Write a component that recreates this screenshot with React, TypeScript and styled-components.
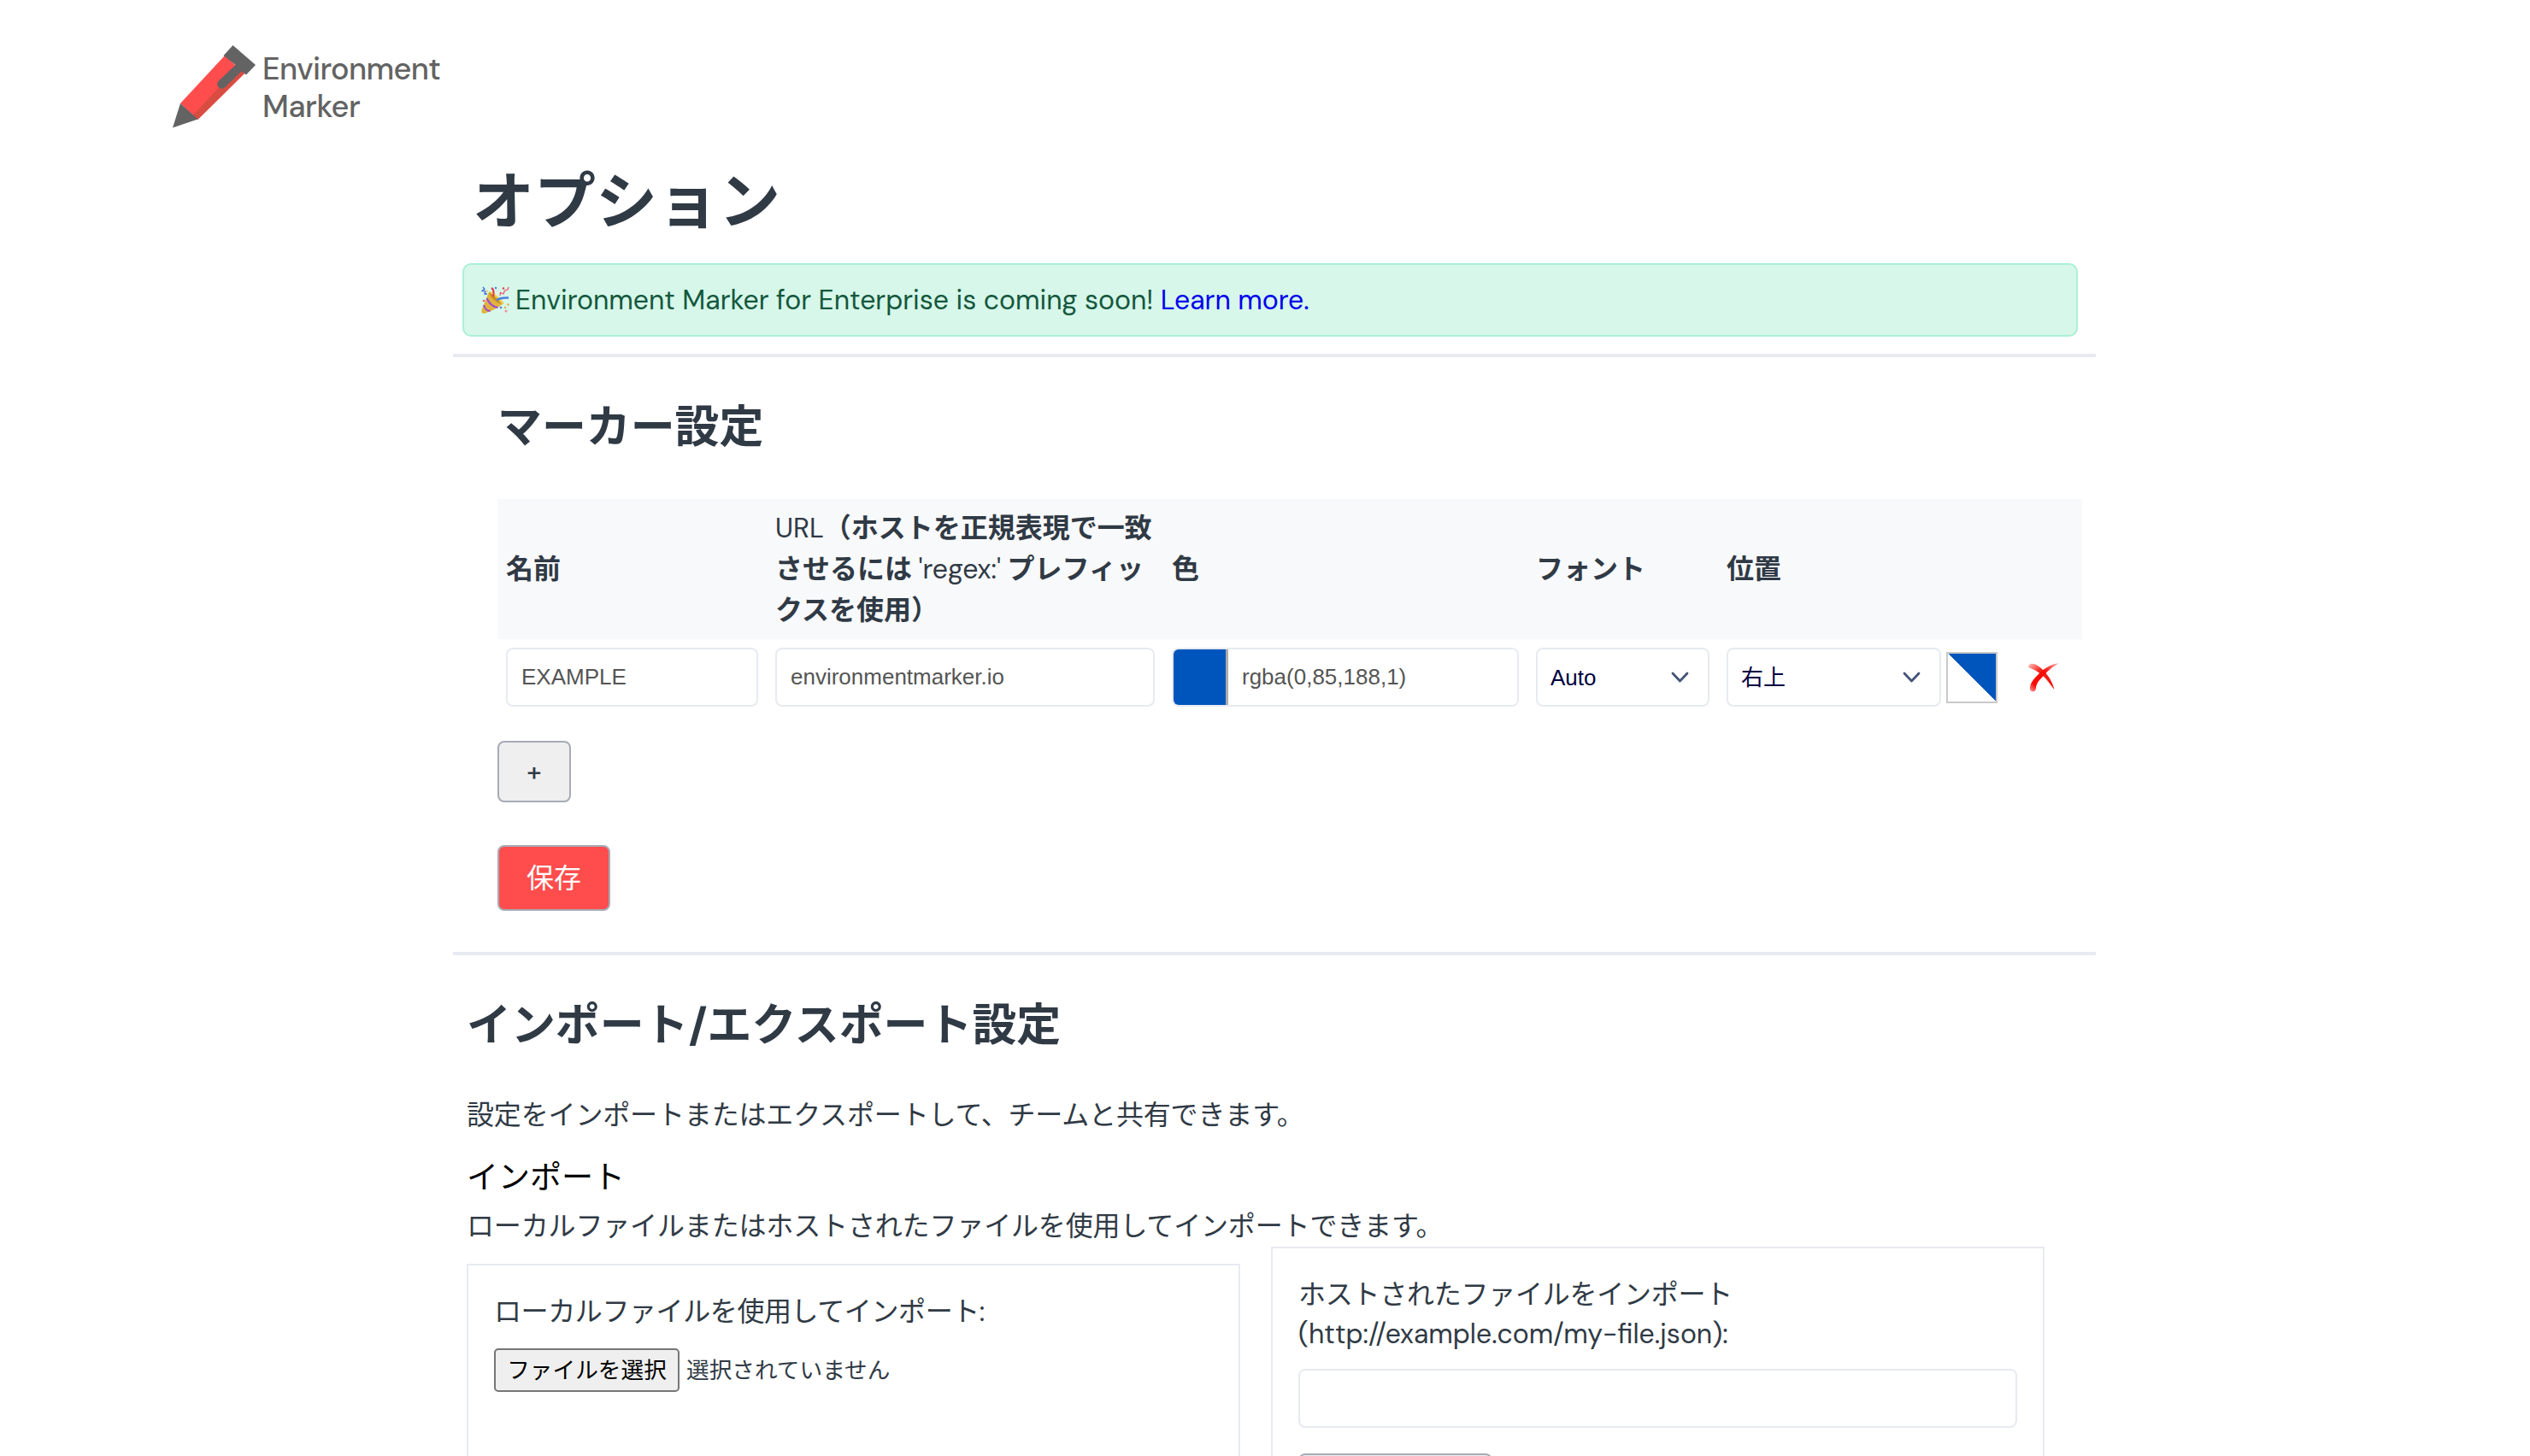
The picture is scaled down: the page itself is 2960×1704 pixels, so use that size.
import React from "react";
import styled, { createGlobalStyle } from "styled-components";

const GlobalStyle = createGlobalStyle`
  *, *::before, *::after { box-sizing: border-box; }
  body {
    margin: 0;
    background: #fff;
    color: #303a45;
    font: 400 32px/48px "DM Sans", Inter, "Noto Sans CJK JP", sans-serif;
  }
  h1, h2, h3, p { margin: 0; }
  button, input { font-family: "Liberation Sans", Arial, "Noto Sans CJK JP", sans-serif; }
`;

const Page = styled.div`
  height: 1704px;
  overflow: hidden;
`;

const Header = styled.header`
  display: flex;
  align-items: flex-start;
  gap: 8px;
  padding: 53px 0 0 202px;
  height: 199px;
`;

const Brand = styled.div`
  padding-top: 6px;
  color: #636363;
  font-size: 36px;
  font-weight: 500;
  line-height: 43.5px;
`;

const BrandLine = styled.div<{ $spacing: number }>`
  letter-spacing: ${(p) => p.$spacing}px;
`;

const Main = styled.main`
  width: 1922px;
  margin-left: 530px;
`;

const Title = styled.h1`
  padding-left: 23px;
  font-size: 72px;
  line-height: 76px;
  font-weight: 700;
`;

const Banner = styled.div`
  display: flex;
  align-items: center;
  height: 86px;
  margin: 33px 21px 20px 11px;
  padding-left: 20px;
  border: 2px solid #abf0d8;
  border-radius: 10px;
  background: #d6f7e9;
  color: #15573d;
  font-size: 32px;
  white-space: pre;
`;

const BannerText = styled.span`
  margin-left: 7px;
`;

const Link = styled.a`
  color: #0000ee;
  text-decoration: none;
`;

const Divider = styled.hr`
  height: 4px;
  margin: 0;
  border: 0;
  background: #e8eaf2;
`;

const MarkerSection = styled.section`
  padding: 50px 16px 48px 52px;
`;

const SectionTitle = styled.h2`
  font-size: 51.9px;
  line-height: 66px;
  font-weight: 700;
`;

const Table = styled.div`
  margin-top: 50px;
`;

const Row = styled.div<{ $head?: boolean }>`
  display: grid;
  grid-template-columns: 315px 464px 426px 223px 426px;
  align-items: center;
  background: ${(p) => (p.$head ? "#f8f9fb" : "transparent")};
`;

const Cell = styled.div`
  display: flex;
  align-items: center;
  padding: 10px;
`;

const HeadCell = styled.div`
  padding: 10px;
  font-weight: 700;
  white-space: nowrap;
`;

const Light = styled.span`
  font-weight: 400;
`;

const TextInput = styled.input`
  width: 100%;
  height: 69px;
  padding: 0 16px;
  border: 2px solid #e8eaf2;
  border-radius: 8px;
  background: #fff;
  color: #555;
  font-size: 26px;
  outline: none;
`;

const ColorField = styled.div`
  display: flex;
  width: 100%;
  height: 69px;
  overflow: hidden;
  border: 2px solid #e8eaf2;
  border-radius: 8px;
`;

const Swatch = styled.div`
  width: 64px;
  border-right: 3px solid #aaa;
  background: #0055bc;
`;

const ColorInput = styled.input`
  flex: 1;
  min-width: 0;
  padding: 0 16px;
  border: 0;
  color: #555;
  font-size: 26px;
  outline: none;
`;

const SelectBox = styled.div<{ $width: number }>`
  display: flex;
  align-items: center;
  justify-content: space-between;
  width: ${(p) => p.$width}px;
  height: 69px;
  padding: 0 22px 0 15px;
  border: 2px solid #e8eaf2;
  border-radius: 8px;
  color: #000040;
  font: 26px/40px "Liberation Sans", Arial, "Noto Sans CJK JP", sans-serif;
`;

const Preview = styled.div`
  width: 60px;
  height: 60px;
  margin: 0 36px 0 6px;
  border: 2px solid #c9c9c9;
  background: linear-gradient(to top right, #fff 50%, #0055bc 50.8%);
`;

const AddButton = styled.button`
  display: block;
  width: 86px;
  height: 72px;
  margin-top: 30px;
  padding: 0;
  border: 2px solid #a8abb5;
  border-radius: 8px;
  background: #efefef;
  color: #303a45;
  font: 500 31px "DM Sans", Inter, sans-serif;
`;

const SaveButton = styled.button`
  display: block;
  width: 132px;
  height: 77px;
  margin-top: 50px;
  padding: 0 0 6px;
  border: 2px solid #a8abb5;
  border-radius: 8px;
  background: #ff4d4d;
  color: #fff;
  font: 400 32px Inter, "Noto Sans CJK JP", sans-serif;
`;

const ImportSection = styled.section`
  padding: 50px 0 0 16px;
`;

const Paragraph = styled.p<{ $top: number }>`
  margin-top: ${(p) => p.$top}px;
  letter-spacing: -0.15px;
`;

const SubTitle = styled.h3`
  margin-top: 26px;
  color: #000;
  font-size: 37px;
  line-height: 46px;
  font-weight: 400;
`;

const Cards = styled.div`
  display: flex;
  align-items: flex-start;
  gap: 36px;
`;

const Card = styled.div<{ $top?: number }>`
  width: 905px;
  height: 400px;
  margin-top: ${(p) => p.$top ?? 0}px;
  padding: 31px 30px;
  border: 2px solid #e8eaf2;
  line-height: 46px;
`;

const Label = styled.div<{ $spacing?: number }>`
  letter-spacing: ${(p) => p.$spacing ?? 0}px;
`;

const FileRow = styled.div`
  display: flex;
  align-items: center;
  gap: 8px;
  margin-top: 20px;
  font-size: 26.67px;
`;

const FileButton = styled.button`
  width: 217px;
  height: 51px;
  padding: 0 0 4px;
  border: 2px solid #767676;
  border-radius: 5px;
  background: #efefef;
  color: #000;
  font: 400 26.67px Inter, "Noto Sans CJK JP", sans-serif;
`;

const UrlField = styled.div`
  margin: 18px 0 30px;
  line-height: 0;
`;

const ImportButton = styled.button`
  width: 227px;
  height: 72px;
  border: 2px solid #a8abb5;
  border-radius: 8px;
  background: #efefef;
`;

const Pencil = () => (
  <svg width="97" height="97" viewBox="0 0 97 97" aria-hidden="true">
    <path d="M61 12 L9 68 L29 87 L84 33Z" fill="#ff4d4d" />
    <path d="M23.500 82 L29.500 87 L84 33 L76 26Z" fill="#d94c42" />
    <path d="M9 68 L29.500 86.500 L0 96.500Z" fill="#636363" />
    <path d="M70.500 0 L97 23 L86 34.500 L80.500 30.500 L61.500 49 A5 5 0 0 1 53.500 42 L73.500 23 L59.500 12Z" fill="#636363" />
  </svg>
);

const Party = () => (
  <svg width="33" height="33" viewBox="0 0 33 33" fill="none" aria-hidden="true">
    <path d="M9 6.500 C14 7 23 16 26.500 20 C20 25 10 30 3.500 32 C1 32 0 30.500 0.500 28 Z" fill="#e2b33a" />
    <path d="M10 6 C15 7 23 15 26.500 20 C24 22 8 10 10 6Z" fill="#f2cd4f" />
    <path d="M9.500 7.500 C13 9 22 17 23.500 20.500 C18 20 9 12 9.500 7.500Z" fill="#c98f25" />
    <path d="M6.500 14 C9 20 14 24 19.500 25 M3 22 C4 26 7 29 10.500 29" stroke="#9a49d8" strokeWidth="2" />
    <path d="M2 1 L4 3.500 L1 5.500 L5 6 L4 9 L7 9" stroke="#3f67dd" strokeWidth="1.300" />
    <path d="M12 2 C15 4 15 8 14 12" stroke="#e23b4e" strokeWidth="2.200" />
    <path d="M32 1 L31 4 L27.500 5 L26 9 L22.500 7.500 L22 11" stroke="#ef5a6c" strokeWidth="1.300" />
    <path d="M18 16.500 C22 13 27 13.500 32 13.500" stroke="#4d80e0" strokeWidth="2.400" />
    <circle cx="3" cy="17" r="1.300" fill="#ef5a6c" />
    <circle cx="17" cy="2" r="1.200" fill="#4d80e0" />
    <circle cx="26" cy="2.500" r="1.200" fill="#e23b4e" />
    <circle cx="7" cy="5.500" r="1.100" fill="#f2cd4f" />
    <circle cx="23" cy="25" r="1.300" fill="#4d80e0" />
    <circle cx="28" cy="25" r="1.200" fill="#e2a94a" />
    <circle cx="31.500" cy="21.500" r="1.200" fill="#e2a94a" />
    <circle cx="29" cy="29" r="1.500" fill="#f28a94" />
  </svg>
);

const Chevron = () => (
  <svg width="21" height="13" viewBox="0 0 21 13" fill="none" aria-hidden="true">
    <path d="M2 2 L10.500 11 L19 2" stroke="#455377" strokeWidth="2.800" strokeLinecap="round" strokeLinejoin="round" />
  </svg>
);

const Cross = () => (
  <svg width="36" height="34" viewBox="0 0 36 34" aria-hidden="true">
    <defs>
      <linearGradient id="fall" x1="0" y1="0" x2="1" y2="1">
        <stop offset="0" stopColor="#ffc4c0" />
        <stop offset="0.35" stopColor="#f5231a" />
        <stop offset="1" stopColor="#f01010" />
      </linearGradient>
      <linearGradient id="rise" x1="1" y1="0" x2="0" y2="1">
        <stop offset="0" stopColor="#f7a09c" />
        <stop offset="0.4" stopColor="#f90b06" />
        <stop offset="0.8" stopColor="#f90b06" />
        <stop offset="1" stopColor="#fba09a" />
      </linearGradient>
    </defs>
    <path d="M1 2 C5 -1 11 2 17 8 C23 14 28 21 30.500 31 C26 26 22 18 14 12.500 C9 8 3 6.500 0.500 5 C0 4 0 3 1 2Z" fill="url(#fall)" />
    <path d="M35.500 0.500 C28 4 21 11 15 18 C9 24 9.500 27 8.500 31.500 C7 34 3 34 2 31 C1 24 7 18 13 12 C20 5 28 1 35.500 0.500Z" fill="url(#rise)" />
  </svg>
);

export default function App() {
  return (
    <Page>
      <GlobalStyle />
      <Header>
        <Pencil />
        <Brand>
          <BrandLine $spacing={-0.6}>Environment</BrandLine>
          <BrandLine $spacing={-0.4}>Marker</BrandLine>
        </Brand>
      </Header>
      <Main>
        <Title>オプション</Title>
        <Banner>
          <Party />
          <BannerText>
            Environment Marker for Enterprise is coming soon! <Link>Learn more.</Link>
          </BannerText>
        </Banner>
        <Divider />
        <MarkerSection>
          <SectionTitle>マーカー設定</SectionTitle>
          <Table>
            <Row $head>
              <HeadCell>名前</HeadCell>
              <HeadCell>
                <Light>URL</Light>（ホストを正規表現で一致
                <br />
                させるには <Light>'regex:'</Light> プレフィッ
                <br />
                クスを使用）
              </HeadCell>
              <HeadCell>色</HeadCell>
              <HeadCell>フォント</HeadCell>
              <HeadCell>位置</HeadCell>
            </Row>
            <Row>
              <Cell>
                <TextInput defaultValue="EXAMPLE" />
              </Cell>
              <Cell>
                <TextInput defaultValue="environmentmarker.io" />
              </Cell>
              <Cell>
                <ColorField>
                  <Swatch />
                  <ColorInput defaultValue="rgba(0,85,188,1)" />
                </ColorField>
              </Cell>
              <Cell>
                <SelectBox $width={203}>
                  Auto
                  <Chevron />
                </SelectBox>
              </Cell>
              <Cell>
                <SelectBox $width={251}>
                  右上
                  <Chevron />
                </SelectBox>
                <Preview />
                <Cross />
              </Cell>
            </Row>
          </Table>
          <AddButton>+</AddButton>
          <SaveButton>保存</SaveButton>
        </MarkerSection>
        <Divider />
        <ImportSection>
          <SectionTitle>インポート/エクスポート設定</SectionTitle>
          <Paragraph $top={47}>設定をインポートまたはエクスポートして、チームと共有できます。</Paragraph>
          <SubTitle>インポート</SubTitle>
          <Paragraph $top={10}>ローカルファイルまたはホストされたファイルを使用してインポートできます。</Paragraph>
          <Cards>
            <Card $top={20}>
              <Label $spacing={-0.4}>ローカルファイルを使用してインポート:</Label>
              <FileRow>
                <FileButton>ファイルを選択</FileButton>
                選択されていません
              </FileRow>
            </Card>
            <Card>
              <Label $spacing={-0.25}>ホストされたファイルをインポート</Label>
              <Label>(http://example.com/my-file.json):</Label>
              <UrlField>
                <TextInput />
              </UrlField>
              <ImportButton />
            </Card>
          </Cards>
        </ImportSection>
      </Main>
    </Page>
  );
}
